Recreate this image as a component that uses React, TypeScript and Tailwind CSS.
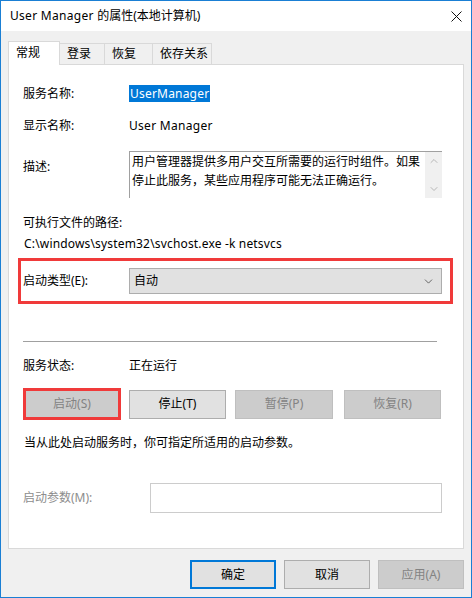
import { ChevronDown, ChevronUp } from "lucide-react";

const font = { fontFamily: '"Noto Sans", "Noto Sans CJK SC", sans-serif' };

function Btn({ label, disabled, primary, className = "" }: { label: string; disabled?: boolean; primary?: boolean; className?: string }) {
  return (
    <div
      className={`flex items-center justify-center text-[12px] ${
        primary
          ? "border-2 border-[#0078d7] bg-[#e1e1e1] text-black"
          : disabled
          ? "border border-[#bfbfbf] bg-[#cccccc] text-[#838383]"
          : "border border-[#adadad] bg-[#e1e1e1] text-black"
      } ${className}`}
    >
      {label}
    </div>
  );
}

export default function App() {
  return (
    <div
      className="w-[472px] h-[598px] border border-[#1a7fd4] bg-[#f0f0f0] flex flex-col text-[12px] text-black overflow-hidden"
      style={font}
    >
      {/* title bar */}
      <div className="h-[30px] bg-white flex items-center justify-between pl-[9px] pr-[9px] shrink-0">
        <span className="text-[12px]">
          <span className="tracking-[0.3px]">User Manager </span>的属性(本地计算机)
        </span>
        <svg width="11" height="11" viewBox="0 0 11 11" className="mt-px">
          <path d="M0.5 0.5 L10.5 10.5 M10.5 0.5 L0.5 10.5" stroke="#111" strokeWidth="1" />
        </svg>
      </div>

      <div className="px-[7px] pt-[10px] flex flex-col">
        {/* tabs */}
        <div className="flex items-end h-[23px] relative z-10">
          <div className="w-[52px] h-[24px] -mb-px self-start bg-white border border-b-0 border-[#d9d9d9] pl-[7px] pt-[2px]">常规</div>
          <div className="w-[46px] h-[21px] -ml-px bg-[#f0f0f0] border border-b-0 border-[#d9d9d9] pl-[7px] pt-[1px]">登录</div>
          <div className="w-[49px] h-[21px] -ml-px bg-[#f0f0f0] border border-b-0 border-[#d9d9d9] pl-[7px] pt-[1px]">恢复</div>
          <div className="w-[60px] h-[21px] -ml-px bg-[#f0f0f0] border border-b-0 border-[#d9d9d9] pl-[7px] pt-[1px]">依存关系</div>
        </div>

        {/* panel */}
        <div className="h-[485px] bg-white border border-[#d9d9d9] flex flex-col pl-[14px] pr-[21px]">
          <div className="flex items-center h-[19px] mt-[19px]">
            <span className="w-[106px]">服务名称:</span>
            <span className="bg-[#0078d7] text-white px-px leading-[17px] tracking-[0.2px]">UserManager</span>
          </div>
          <div className="flex items-center h-[19px] mt-[13px]">
            <span className="w-[106px]">显示名称:</span>
            <span className="tracking-[0.3px]">User Manager</span>
          </div>
          <div className="flex items-start h-[47px] mt-[16px]">
            <span className="w-[106px] pt-[7px]">描述:</span>
            <div className="flex-1 h-[47px] border-t border-l border-[#a0a0a0] flex">
              <div className="flex-1 pl-[2px] leading-[19px]">
                用户管理器提供多用户交互所需要的运行时组件。如果停止此服务，某些应用程序可能无法正确运行。
              </div>
              <div className="w-[17px] bg-[#f0f0f0] flex flex-col items-center justify-between py-[3px]">
                <ChevronUp size={12} strokeWidth={1.5} color="#a3a3a3" />
                <ChevronDown size={12} strokeWidth={1.5} color="#a3a3a3" />
              </div>
            </div>
          </div>
          <div className="flex items-center h-[19px] mt-[15px]">可执行文件的路径:</div>
          <div className="flex items-center h-[19px] mt-[2px] pl-px tracking-[0.17px]">C:\windows\system32\svchost.exe -k netsvcs</div>

          {/* highlighted startup type */}
          <div className="h-[46px] mt-[5px] -ml-[5px] -mr-[11px] border-[3px] border-[#f03a3a] flex items-center pl-[2px] pr-[8px]">
            <span className="w-[106px]">启动类型(E):</span>
            <div className="flex-1 h-[26px] bg-[#e1e1e1] border border-[#adadad] flex items-center justify-between pl-[4px] pr-[6px]">
              <span>自动</span>
              <ChevronDown size={13} strokeWidth={1.3} color="#333" />
            </div>
          </div>

          <div className="h-px bg-[#a0a0a0] mt-[37px] mr-[5px]" />

          <div className="flex items-center h-[19px] mt-[14px]">
            <span className="w-[106px]">服务状态:</span>
            <span>正在运行</span>
          </div>

          <div className="flex items-center mt-[13px] h-[32px]">
            <div className="w-[98px] h-[32px] border-[3px] border-[#f03a3a] bg-[#cccccc] text-[#838383] flex items-center justify-center">
              启动(S)
            </div>
            <Btn label="停止(T)" className="w-[97px] h-[29px] ml-[8px]" />
            <Btn label="暂停(P)" disabled className="w-[98px] h-[29px] ml-[9px]" />
            <Btn label="恢复(R)" disabled className="w-[97px] h-[29px] ml-[11px]" />
          </div>

          <div className="flex items-center h-[19px] mt-[13px] pl-px">当从此处启动服务时，你可指定所适用的启动参数。</div>

          <div className="flex items-center mt-[31px] h-[30px]">
            <span className="w-[127px] text-[#8d8d8d]">启动参数(M):</span>
            <div className="flex-1 h-[30px] bg-white border border-[#cccccc]" />
          </div>
        </div>

        {/* dialog buttons */}
        <div className="flex justify-end gap-[9px] mt-[11px]">
          <Btn label="确定" primary className="w-[86px] h-[29px]" />
          <Btn label="取消" className="w-[86px] h-[29px] -ml-px" />
          <Btn label="应用(A)" disabled className="w-[86px] h-[29px] -ml-px" />
        </div>
      </div>
    </div>
  );
}
